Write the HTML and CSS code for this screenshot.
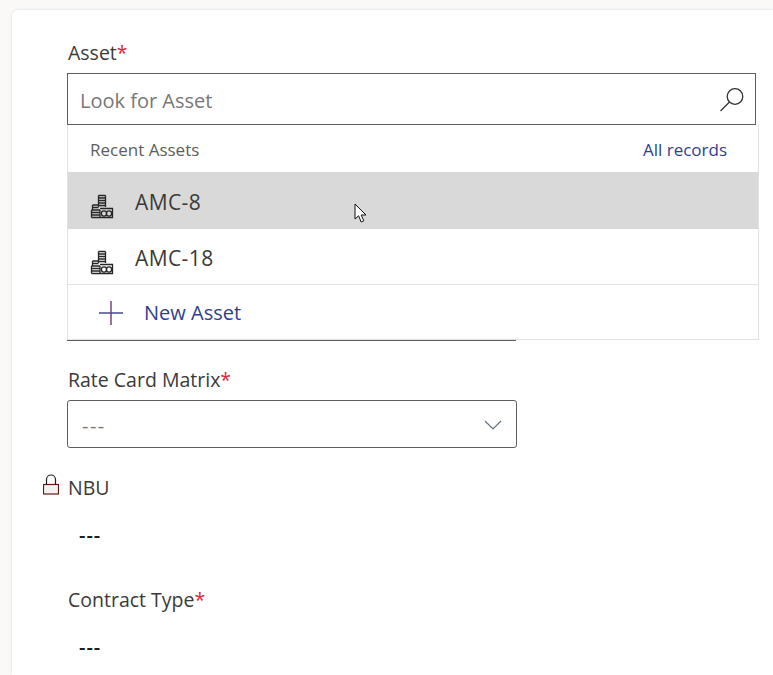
FILE: index.html
```html
<!DOCTYPE html>
<html lang="en">
<head>
    <meta charset="UTF-8">
    <meta name="viewport" content="width=device-width, initial-scale=1.0">
    <title>Asset lookup</title>
    <link rel="stylesheet" href="styles.css">
</head>
<body>
    <main class="card">
        <div class="field field-asset">
            <label class="field-label" for="asset">Asset<span class="req">*</span></label>
            <div class="lookup">
                <input class="lookup-input" type="text" id="asset" placeholder="Look for Asset">
                <svg class="search-icon" width="28" height="28" viewBox="0 0 28 28" fill="none" stroke="#323130" stroke-width="1.3">
                    <circle cx="17" cy="11.5" r="7.8"/>
                    <path d="M11.5 17 L2.5 26"/>
                </svg>
            </div>
            <div class="covered-field"></div>

            <div class="flyout">
                <div class="flyout-head">
                    <span class="recent">Recent Assets</span>
                    <a class="all-records" href="#">All records</a>
                </div>
                <div class="flyout-row flyout-row-active">
                    <svg class="coins" width="24" height="26" viewBox="0 0 24 26"><use href="#coins"/></svg>
                    <span>AMC-8</span>
                </div>
                <div class="flyout-row">
                    <svg class="coins" width="24" height="26" viewBox="0 0 24 26"><use href="#coins"/></svg>
                    <span>AMC-18</span>
                </div>
                <div class="flyout-new">
                    <svg width="26" height="26" viewBox="0 0 26 26">
                        <path d="M1 13 H25" stroke="#2f3f8f" stroke-width="1.4"/>
                        <path d="M13 1 V25" stroke="#6a3a6e" stroke-width="1.4"/>
                    </svg>
                    <span>New Asset</span>
                </div>
            </div>
            <svg class="cursor" width="14" height="21" viewBox="0 0 14 21">
                <path d="M1 1 V16 L4.6 12.8 L7.2 19 L9.8 17.8 L7.2 12 H12 Z" fill="#fff" stroke="#111" stroke-width="1"/>
            </svg>
        </div>

        <div class="field field-rate">
            <label class="field-label" for="rate">Rate Card Matrix<span class="req">*</span></label>
            <div class="select-box" id="rate">
                <span>---</span>
                <svg width="18" height="10" viewBox="0 0 18 10" fill="none" stroke="#5f7480" stroke-width="1.2">
                    <path d="M1 1 L9 9 L17 1"/>
                </svg>
            </div>
        </div>

        <div class="field field-nbu">
            <svg class="lock" width="16" height="21" viewBox="0 0 16 21" fill="none">
                <rect x="0.5" y="10.5" width="15" height="9.5" fill="#f3f2f1" stroke="#6b1414" stroke-width="1.2"/>
                <path d="M3.5 10.5 V5.5 a4.5 4.5 0 0 1 9 0 V10.5" stroke="#1f1a1a" stroke-width="1.2"/>
            </svg>
            <div class="field-label">NBU</div>
            <div class="readonly">---</div>
        </div>

        <div class="field field-contract">
            <div class="field-label">Contract Type<span class="req">*</span></div>
            <div class="readonly">---</div>
        </div>
    </main>

    <svg class="defs" width="0" height="0">
        <symbol id="coins" viewBox="0 0 24 26">
            <g fill="none" stroke="#262626" stroke-width="1.3">
                <path d="M8.5 1.5 H15.5 M8.5 4 H15.5 M8.5 6.5 H15.5 M8.5 9 H15.5 M8.5 11.5 H15.5"/>
                <path d="M8.5 1.5 V13 M15.5 1.5 V13"/>
                <path d="M2.5 11 H8.5 M2.5 13.5 H8.5 M1.5 16 H10 M1.5 18.5 H10 M1.5 21 H10 M1.5 23.5 H10"/>
                <path d="M2.5 11 V16 M1.5 16 V23.5 M10 16 V23.5"/>
                <path d="M10 14.5 H22.5 V23.5 H10"/>
                <circle cx="14" cy="19.5" r="2.6"/>
                <circle cx="19" cy="19.5" r="2.6"/>
            </g>
        </symbol>
    </svg>
</body>
</html>
```
FILE: styles.css
```css
html, body {
    height: 100%;
}
body {
    margin: 0;
    background-color: #faf9f8;
    font-family: "Open Sans", "Noto Sans", sans-serif;
    color: #323130;
    overflow: hidden;
}
.defs {
    display: block;
}
.card {
    box-sizing: border-box;
    height: calc(100% - 10px);
    margin: 10px 0 0 12px;
    padding: 28px 17px 0 55px;
    background-color: #fff;
    border-radius: 6px 0 0 0;
    box-shadow: 0 0 3px rgba(0, 0, 0, 0.12);
}
.field {
    position: relative;
}
.field-label {
    display: block;
    padding: 1px 0 0 1px;
    font-size: 19.5px;
    line-height: 28px;
    color: #3b3a39;
}
.req {
    color: #e0263c;
}
.lookup {
    position: relative;
    margin-top: 6px;
}
.lookup-input {
    box-sizing: border-box;
    display: block;
    width: 100%;
    height: 52px;
    padding: 2px 50px 0 12px;
    border: 1px solid #605e5c;
    outline: none;
    font-family: inherit;
    font-size: 20px;
    color: #323130;
}
.lookup-input::placeholder {
    color: #777;
    opacity: 1;
}
.search-icon {
    position: absolute;
    top: 12px;
    right: 10px;
}
.covered-field {
    width: 449px;
    height: 216px;
    box-sizing: border-box;
    border-bottom: 1px solid #605e5c;
}
.flyout {
    position: absolute;
    top: 87px;
    left: 0;
    right: -3px;
    height: 215px;
    box-sizing: border-box;
    background-color: #fff;
    border: 1px solid #e3e3e3;
    border-top: 0;
}
.flyout-head {
    display: flex;
    justify-content: space-between;
    align-items: center;
    height: 47px;
    padding: 1px 31px 0 22px;
    box-sizing: border-box;
    font-size: 17px;
}
.recent {
    color: #605e5c;
}
.all-records {
    color: #2f3f8f;
    text-decoration: none;
}
.flyout-row {
    display: flex;
    align-items: center;
    gap: 21px;
    height: 55px;
    padding: 2px 0 0 22px;
    box-sizing: border-box;
    font-size: 21px;
    letter-spacing: 0.4px;
    color: #3b3a39;
}
.flyout-row-active {
    height: 57px;
    background-color: #d9d9d9;
}
.coins {
    margin-top: 10px;
}
.flyout-new {
    display: flex;
    align-items: center;
    gap: 20px;
    height: 55px;
    padding: 1px 0 0 30px;
    box-sizing: border-box;
    border-top: 1px solid #e3e3e3;
    font-size: 20px;
    color: #2f3f8f;
}
.cursor {
    position: absolute;
    top: 165px;
    left: 287px;
}
.field-rate {
    margin-top: 24px;
}
.select-box {
    display: flex;
    justify-content: space-between;
    align-items: center;
    box-sizing: border-box;
    width: 450px;
    height: 48px;
    margin-top: 6px;
    padding: 2px 14px 0 14px;
    border: 1px solid #605e5c;
    border-radius: 3px;
    font-size: 20px;
    letter-spacing: 1.5px;
    color: #777;
}
.field-nbu {
    margin-top: 25px;
}
.lock {
    position: absolute;
    top: 1px;
    left: -24px;
}
.readonly {
    margin-top: 19px;
    padding-left: 12px;
    font-size: 20px;
    line-height: 28px;
    font-weight: 600;
    letter-spacing: 1px;
    color: #201f1e;
}
.field-contract {
    margin-top: 36px;
}
```
